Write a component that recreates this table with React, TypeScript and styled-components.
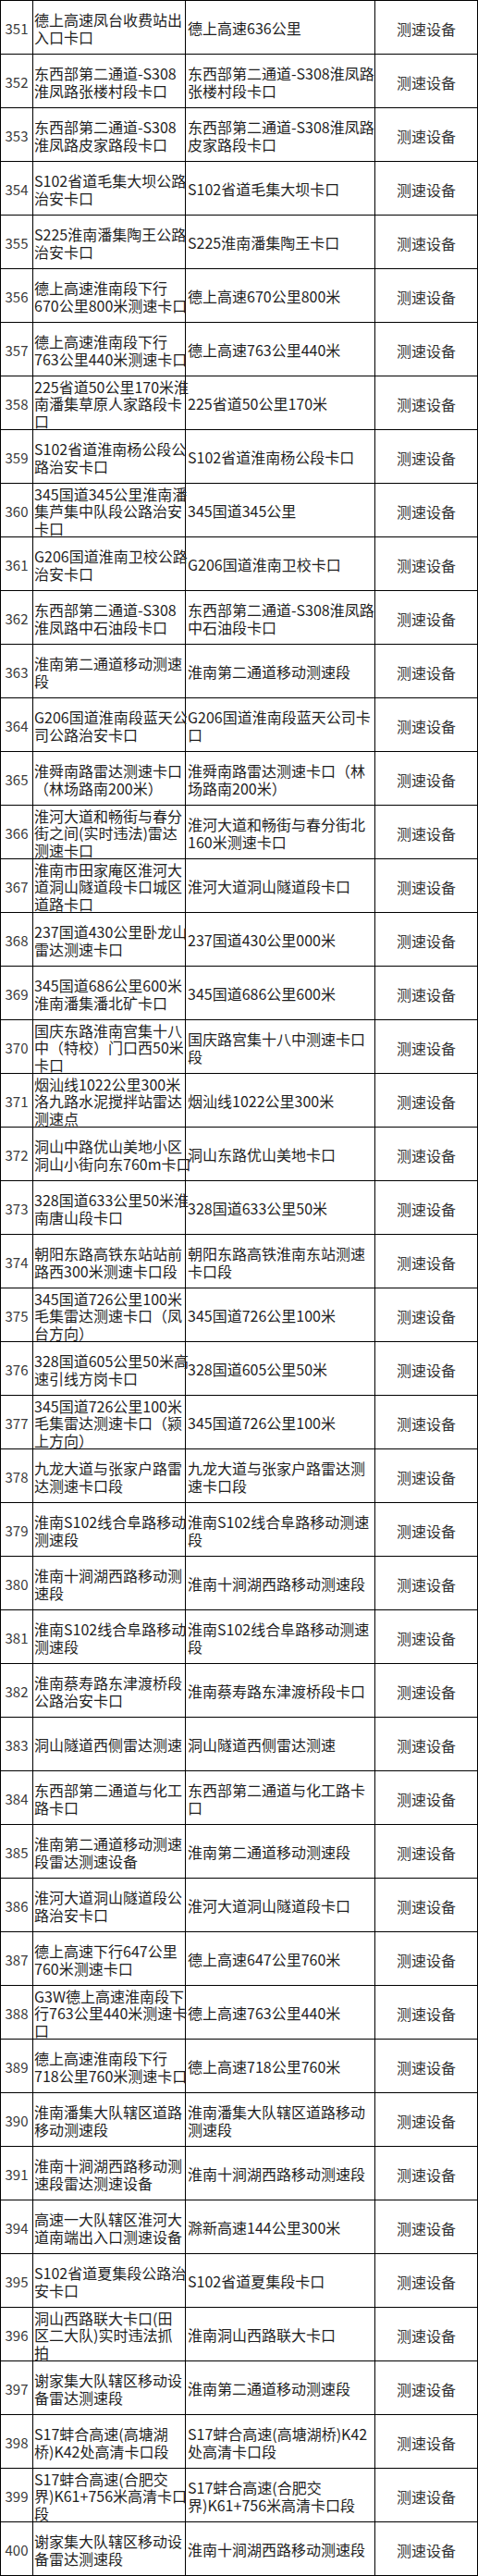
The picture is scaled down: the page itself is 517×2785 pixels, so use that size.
import styled, { createGlobalStyle } from 'styled-components';

const GlobalStyle = createGlobalStyle`
  html, body {
    margin: 0;
    padding: 0;
    background: #ffffff;
  }
  body {
    font-family: "Noto Sans CJK SC", "Noto Sans", sans-serif;
    color: #1f1f1f;
  }
`;

type Item = {
  no: string;
  name: string;
  place: string;
};

// 每格按原表的折行方式写死
const items: Item[] = [
  { no: '351', name: '德上高速凤台收费站出\n入口卡口', place: '德上高速636公里' },
  { no: '352', name: '东西部第二通道-S308\n淮凤路张楼村段卡口', place: '东西部第二通道-S308淮凤路\n张楼村段卡口' },
  { no: '353', name: '东西部第二通道-S308\n淮凤路皮家路段卡口', place: '东西部第二通道-S308淮凤路\n皮家路段卡口' },
  { no: '354', name: 'S102省道毛集大坝公路\n治安卡口', place: 'S102省道毛集大坝卡口' },
  { no: '355', name: 'S225淮南潘集陶王公路\n治安卡口', place: 'S225淮南潘集陶王卡口' },
  { no: '356', name: '德上高速淮南段下行\n670公里800米测速卡口', place: '德上高速670公里800米' },
  { no: '357', name: '德上高速淮南段下行\n763公里440米测速卡口', place: '德上高速763公里440米' },
  { no: '358', name: '225省道50公里170米淮\n南潘集草原人家路段卡\n口', place: '225省道50公里170米' },
  { no: '359', name: 'S102省道淮南杨公段公\n路治安卡口', place: 'S102省道淮南杨公段卡口' },
  { no: '360', name: '345国道345公里淮南潘\n集芦集中队段公路治安\n卡口', place: '345国道345公里' },
  { no: '361', name: 'G206国道淮南卫校公路\n治安卡口', place: 'G206国道淮南卫校卡口' },
  { no: '362', name: '东西部第二通道-S308\n淮凤路中石油段卡口', place: '东西部第二通道-S308淮凤路\n中石油段卡口' },
  { no: '363', name: '淮南第二通道移动测速\n段', place: '淮南第二通道移动测速段' },
  { no: '364', name: 'G206国道淮南段蓝天公\n司公路治安卡口', place: 'G206国道淮南段蓝天公司卡\n口' },
  { no: '365', name: '淮舜南路雷达测速卡口\n（林场路南200米）', place: '淮舜南路雷达测速卡口（林\n场路南200米）' },
  { no: '366', name: '淮河大道和畅街与春分\n街之间(实时违法)雷达\n测速卡口', place: '淮河大道和畅街与春分街北\n160米测速卡口' },
  { no: '367', name: '淮南市田家庵区淮河大\n道洞山隧道段卡口城区\n道路卡口', place: '淮河大道洞山隧道段卡口' },
  { no: '368', name: '237国道430公里卧龙山\n雷达测速卡口', place: '237国道430公里000米' },
  { no: '369', name: '345国道686公里600米\n淮南潘集潘北矿卡口', place: '345国道686公里600米' },
  { no: '370', name: '国庆东路淮南宫集十八\n中（特校）门口西50米\n卡口', place: '国庆路宫集十八中测速卡口\n段' },
  { no: '371', name: '烟汕线1022公里300米\n洛九路水泥搅拌站雷达\n测速点', place: '烟汕线1022公里300米' },
  { no: '372', name: '洞山中路优山美地小区\n洞山小街向东760m卡口', place: '洞山东路优山美地卡口' },
  { no: '373', name: '328国道633公里50米淮\n南唐山段卡口', place: '328国道633公里50米' },
  { no: '374', name: '朝阳东路高铁东站站前\n路西300米测速卡口段', place: '朝阳东路高铁淮南东站测速\n卡口段' },
  { no: '375', name: '345国道726公里100米\n毛集雷达测速卡口（凤\n台方向）', place: '345国道726公里100米' },
  { no: '376', name: '328国道605公里50米高\n速引线方岗卡口', place: '328国道605公里50米' },
  { no: '377', name: '345国道726公里100米\n毛集雷达测速卡口（颍\n上方向）', place: '345国道726公里100米' },
  { no: '378', name: '九龙大道与张家户路雷\n达测速卡口段', place: '九龙大道与张家户路雷达测\n速卡口段' },
  { no: '379', name: '淮南S102线合阜路移动\n测速段', place: '淮南S102线合阜路移动测速\n段' },
  { no: '380', name: '淮南十涧湖西路移动测\n速段', place: '淮南十涧湖西路移动测速段' },
  { no: '381', name: '淮南S102线合阜路移动\n测速段', place: '淮南S102线合阜路移动测速\n段' },
  { no: '382', name: '淮南蔡寿路东津渡桥段\n公路治安卡口', place: '淮南蔡寿路东津渡桥段卡口' },
  { no: '383', name: '洞山隧道西侧雷达测速', place: '洞山隧道西侧雷达测速' },
  { no: '384', name: '东西部第二通道与化工\n路卡口', place: '东西部第二通道与化工路卡\n口' },
  { no: '385', name: '淮南第二通道移动测速\n段雷达测速设备', place: '淮南第二通道移动测速段' },
  { no: '386', name: '淮河大道洞山隧道段公\n路治安卡口', place: '淮河大道洞山隧道段卡口' },
  { no: '387', name: '德上高速下行647公里\n760米测速卡口', place: '德上高速647公里760米' },
  { no: '388', name: 'G3W德上高速淮南段下\n行763公里440米测速卡\n口', place: '德上高速763公里440米' },
  { no: '389', name: '德上高速淮南段下行\n718公里760米测速卡口', place: '德上高速718公里760米' },
  { no: '390', name: '淮南潘集大队辖区道路\n移动测速段', place: '淮南潘集大队辖区道路移动\n测速段' },
  { no: '391', name: '淮南十涧湖西路移动测\n速段雷达测速设备', place: '淮南十涧湖西路移动测速段' },
  { no: '394', name: '高速一大队辖区淮河大\n道南端出入口测速设备', place: '滁新高速144公里300米' },
  { no: '395', name: 'S102省道夏集段公路治\n安卡口', place: 'S102省道夏集段卡口' },
  { no: '396', name: '洞山西路联大卡口(田\n区二大队)实时违法抓\n拍', place: '淮南洞山西路联大卡口' },
  { no: '397', name: '谢家集大队辖区移动设\n备雷达测速段', place: '淮南第二通道移动测速段' },
  { no: '398', name: 'S17蚌合高速(高塘湖\n桥)K42处高清卡口段', place: 'S17蚌合高速(高塘湖桥)K42\n处高清卡口段' },
  { no: '399', name: 'S17蚌合高速(合肥交\n界)K61+756米高清卡口\n段', place: 'S17蚌合高速(合肥交\n界)K61+756米高清卡口段' },
  { no: '400', name: '谢家集大队辖区移动设\n备雷达测速段', place: '淮南十涧湖西路移动测速段' },
];

export default function App() {
  return (
    <>
      <GlobalStyle />
      <Sheet>
        {items.map((item) => (
          <Row key={item.no}>
            <NoCell>{item.no}</NoCell>
            <TextCell $pad={1}>{item.name}</TextCell>
            <TextCell $pad={2}>{item.place}</TextCell>
            <TypeCell>测速设备</TypeCell>
          </Row>
        ))}
      </Sheet>
    </>
  );
}

const Sheet = styled.div`
  width: 517px;
  box-sizing: border-box;
  border-top: 1px solid #000;
  border-left: 1px solid #000;
  background: #fff;
`;

const Row = styled.div`
  display: grid;
  grid-template-columns: 35px 165px 205px 111px;
  height: 58px;
`;

const Cell = styled.div`
  box-sizing: border-box;
  height: 58px;
  border-right: 1px solid #000;
  border-bottom: 1px solid #000;
  display: flex;
  align-items: center;
  font-size: 16px;
  overflow: visible;
  padding-top: 2px;
`;

const NoCell = styled(Cell)`
  justify-content: center;
  color: #3a3a3a;
  font-size: 15px;
`;

const TextCell = styled(Cell)<{ $pad: number }>`
  justify-content: flex-start;
  padding-left: ${(p) => p.$pad}px;
  line-height: 18.4px;
  white-space: pre;
  color: #1f1f1f;
`;

const TypeCell = styled(Cell)`
  justify-content: center;
  color: #333;
`;
